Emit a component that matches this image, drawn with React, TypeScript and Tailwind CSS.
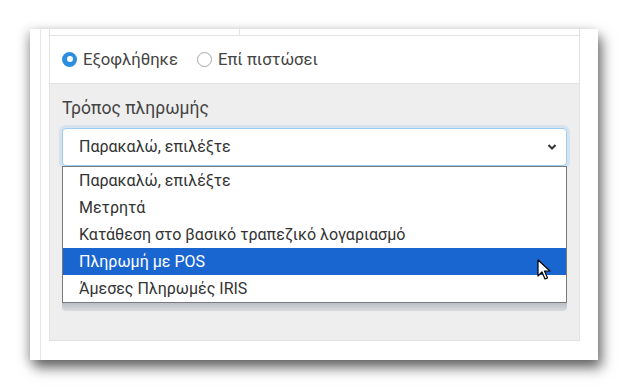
import React from "react"

const options = [
  "Παρακαλώ, επιλέξτε",
  "Μετρητά",
  "Κατάθεση στο βασικό τραπεζικό λογαριασμό",
  "Πληρωμή με POS",
  "Άμεσες Πληρωμές IRIS",
]

const Radio = ({ checked, label }: { checked?: boolean; label: string }) => (
  <label className="flex items-center gap-[6px]">
    {checked ? (
      <span className="w-[15px] h-[15px] rounded-full bg-[#2d8ee0] flex items-center justify-center">
        <span className="w-[6px] h-[6px] rounded-full bg-white" />
      </span>
    ) : (
      <span className="w-[15px] h-[15px] rounded-full border border-[#a8a8a8] bg-white" />
    )}
    <span>{label}</span>
  </label>
)

const Cursor = () => (
  <svg width="14" height="22" viewBox="0 0 14 22" className="absolute right-[15px] top-[11px]">
    <path
      d="M1 1 L1 17 L5 13 L8 20 L10.5 19 L7.5 12 L13 12 Z"
      fill="#fff"
      stroke="#000"
      strokeWidth="1.2"
      strokeLinejoin="round"
    />
  </svg>
)

export default function App() {
  return (
    <div className="w-[628px] h-[392px] bg-white pt-[29px] pl-[30px] font-['Roboto',sans-serif] text-[#444]">
      <div className="w-[568px] h-[331px] bg-white flex shadow-[4px_8px_12px_rgba(0,0,0,0.55),-3px_2px_10px_rgba(0,0,0,0.2)]">
        <div className="w-[10px]" />
        <div className="w-px bg-[#e6e6e6]" />
        <div className="w-[8px]" />
        <div className="w-[531px] self-start border-x border-b border-[#e2e2e2]">
          <div className="h-[7px] flex border-b border-[#e2e2e2]">
            <div className="w-[190px] border-r border-[#e2e2e2]" />
          </div>
          <div className="h-[48px] flex items-center gap-[19px] pl-[12px] text-[16.7px] border-b border-[#e2e2e2]">
            <Radio checked label="Εξοφλήθηκε" />
            <Radio label="Επί πιστώσει" />
          </div>
          <div className="bg-[#eeeeee] px-[12px] pt-[12px] pb-[29px]">
            <div className="text-[17.5px] leading-[24px] mb-[8px]">Τρόπος πληρωμής</div>
            <div className="h-[38px] flex items-center justify-between pl-[16px] pr-[9px] bg-white border border-[#9fcdf2] rounded-[4px] shadow-[0_0_0_3px_rgba(140,195,240,0.25)] text-[16px] text-[#333]">
              <span>Παρακαλώ, επιλέξτε</span>
              <svg width="10" height="8" viewBox="0 0 10 8">
                <path d="M1.5 2 L5 5.5 L8.5 2" fill="none" stroke="#333" strokeWidth="2" />
              </svg>
            </div>
            <div className="relative w-[505px]">
              <div className="bg-white border border-[#7a7a7a] text-[16px] text-[#333] relative z-10">
                {options.map((o, i) => (
                  <div
                    key={o}
                    className={`h-[27px] leading-[27px] pl-[16px] ${
                      i === 3 ? "bg-[#1a66d0] text-white relative" : ""
                    }`}
                  >
                    {o}
                    {i === 3 && <Cursor />}
                  </div>
                ))}
              </div>
              <div className="h-[9px] -mt-px rounded-b-[4px] bg-gradient-to-b from-[#b7bcc3] to-[#d9dce0]" />
            </div>
          </div>
        </div>
      </div>
    </div>
  )
}
